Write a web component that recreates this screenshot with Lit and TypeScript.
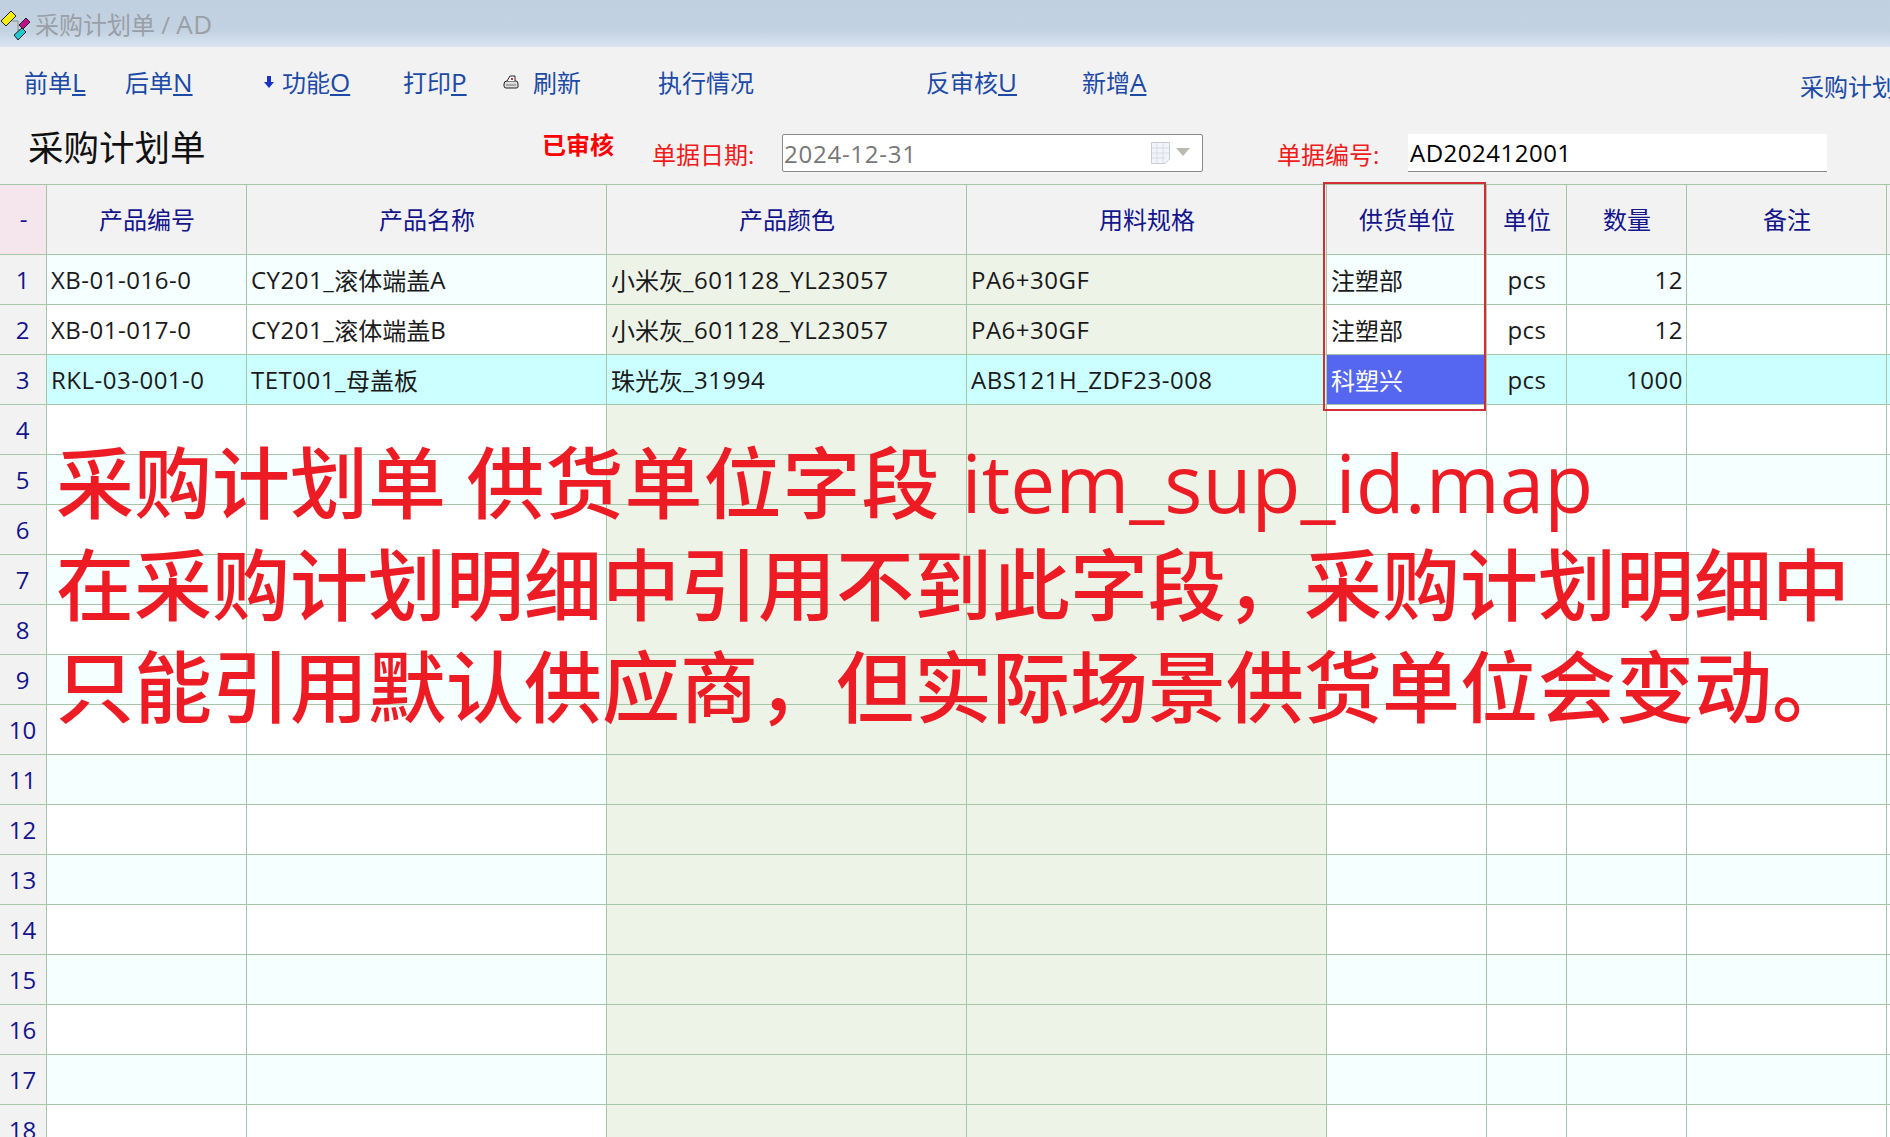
import { LitElement, html, css, svg } from "lit";
import { customElement } from "lit/decorators.js";

const HEAD = ["产品编号", "产品名称", "产品颜色", "用料规格", "供货单位", "单位", "数量", "备注"];
const DATA: Record<number, string[]> = {
  1: ["XB-01-016-0", "CY201_滚体端盖A", "小米灰_601128_YL23057", "PA6+30GF", "注塑部", "pcs", "12", ""],
  2: ["XB-01-017-0", "CY201_滚体端盖B", "小米灰_601128_YL23057", "PA6+30GF", "注塑部", "pcs", "12", ""],
  3: ["RKL-03-001-0", "TET001_母盖板", "珠光灰_31994", "ABS121H_ZDF23-008", "科塑兴", "pcs", "1000", ""],
};
const ALIGN = ["", "", "", "", "", "center", "right", ""];

const runs = (t: string) =>
  t.split(/([\x21-\x7e]+)/).map((p, i) => (i % 2 ? html`<span class="l">${p}</span>` : p));

@customElement("app-root")
export class AppRoot extends LitElement {
  static styles = css`
    :host {
      display: block;
      position: relative;
      width: 1890px;
      height: 1137px;
      overflow: hidden;
      background: #f2f2f2;
      font-family: "Open Sans", "Noto Sans CJK SC", sans-serif;
      font-size: 24px;
      color: #1a1a1a;
    }
    .l { letter-spacing: 0.5px; }
    .title {
      height: 47px;
      display: flex;
      align-items: center;
      background: linear-gradient(#c1d0e0 0%, #c3d2e1 65%, #d9e5f1 100%);
      color: #9a9fa6;
      font-size: 24px;
      gap: 4px;
    }
    .title .l { font-size: 26px; }
    .title svg { width: 31px; height: 36px; flex: none; }
    .toolbar {
      height: 72px;
      box-sizing: border-box;
      padding-bottom: 3px;
      display: grid;
      grid-template-columns: 24px 101px 138px 19px 121px 100px 30px 125px 268px 156px 718px 1fr;
      align-items: center;
      color: #1c4aa6;
      white-space: nowrap;
    }
    .toolbar u { text-underline-offset: 2px; font-size: 26px; line-height: 24px; }
    .side { margin-top: 8px; overflow: hidden; }
    .form {
      height: 65px;
      display: grid;
      grid-template-columns: 28px 514px 110px 130px 421px 74px 131px 419px;
      align-items: center;
    }
    .doc {
      font-family: "Liberation Serif", "Noto Sans CJK SC", serif;
      font-size: 35.500px;
      color: #111;
      margin-bottom: 13px;
      white-space: nowrap;
    }
    .state { color: #f00; font-weight: 700; margin-bottom: 17px; white-space: nowrap; }
    .lab { color: #f01c1c; margin-top: 3px; white-space: nowrap; }
    .date {
      height: 38px;
      margin-top: 3px;
      box-sizing: border-box;
      border: 1px solid #8a8a8a;
      border-radius: 2px;
      background: #fff;
      color: #777;
      display: flex;
      align-items: center;
      padding-left: 1px;
    }
    .date span { flex: 1; }
    .date .l { flex: none; letter-spacing: 0.75px; }
    .date svg { width: 44px; height: 24px; margin-right: 8px; }
    .code {
      height: 38px;
      margin-top: 3px;
      box-sizing: border-box;
      background: #fff;
      border-bottom: 1px solid #8a8a8a;
      color: #000;
      display: flex;
      align-items: center;
      padding-left: 2px;
    }
    .grid {
      display: grid;
      grid-template-columns: 47px 200px 360px 360px 360px 160px 80px 120px 200px 3px;
      grid-template-rows: 70px;
      grid-auto-rows: 50px;
      border-top: 1px solid #a6c6a8;
    }
    .grid > div {
      box-sizing: border-box;
      border-right: 1px solid #a6c6a8;
      border-bottom: 1px solid #a6c6a8;
      display: flex;
      align-items: center;
      padding: 0 3px 0 4px;
      white-space: nowrap;
      overflow: hidden;
    }
    .grid > .h { justify-content: center; color: #14148c; background: #f2f2f2; padding-bottom: 2px; }
    .grid > .n { background: #f2f2f2; color: #14148c; justify-content: center; padding: 0 1px 0 0; }
    .grid > .corner { background: #f5e6ee; }
    .grid > .odd { background: #f5ffff; }
    .grid > .even { background: #fff; }
    .grid > .green { background: #eef3e8; }
    .grid > .cur { background: #ccffff; }
    .grid > .sel { background: #5566f0; color: #fff; }
    .grid > .center { justify-content: center; }
    .grid > .right { justify-content: flex-end; }
    .grid > .end { border-right: none; }
    .box {
      position: absolute;
      left: 1323px;
      top: 182px;
      width: 163px;
      height: 229px;
      box-sizing: border-box;
      border: 2px solid #d12f35;
      pointer-events: none;
    }
    .note {
      position: absolute;
      left: 56px;
      top: 425px;
      color: #ed1c24;
      font-family: "Noto Sans CJK SC", "Open Sans", sans-serif;
      font-size: 78px;
      font-weight: 500;
      line-height: 102px;
      white-space: nowrap;
    }
    .note .first { margin: 3px 0 -3px; }
    .note .latin {
      font-family: "Open Sans", "Noto Sans CJK SC", sans-serif;
      font-size: 80px;
      font-weight: 400;
      margin-left: 21px;
    }
    .note .gap { margin-left: 3px; letter-spacing: 1px; }
    .ic { display: block; }
  `;

  private appIcon() {
    return svg`<svg viewBox="0 0 31 36">
      <path d="M12 15h6v9h6M18 24v4" fill="none" stroke="#8a8a8a" stroke-width="1"/>
      <path d="M1 15 L11 5 L16 10 L6 20 Z" fill="#f4ee10" stroke="#222" stroke-width="1"/>
      <path d="M19 19 L26 12 L30 16 L23 23 Z" fill="#c01088" stroke="#222" stroke-width="1"/>
      <path d="M14 29 L22 22 L26 26 L18 34 Z" fill="#22c8d0" stroke="#222" stroke-width="1"/>
    </svg>`;
  }

  private arrow() {
    return svg`<svg class="ic" width="12" height="14" viewBox="0 0 12 14"><path d="M4 1h4v6h3L6 13 1 7h3z" fill="#1a32c8"/></svg>`;
  }

  private printer() {
    return svg`<svg class="ic" width="16" height="14" viewBox="0 0 16 14">
      <path d="M1 9 Q1 6 4 6 H13 Q15 6 15 9 V12 Q15 13 13 13 H3 Q1 13 1 11 Z" fill="#ddd" stroke="#222"/>
      <path d="M4 6 L7 1 H12 L12 6" fill="#fff" stroke="#222"/>
      <path d="M8 3l2 2M10 3l-2 2" stroke="#d03030"/>
      <path d="M3 10h10" stroke="#777"/>
    </svg>`;
  }

  private calendar() {
    return svg`<svg viewBox="0 0 44 24">
      <path d="M1.500 1.500H19.500V18L15 22.500H1.500Z" fill="#f2f4fa" stroke="#c8ccd4"/>
      <path d="M2 7H19M2 12H19M2 17H15M7 2V22M13 2V22" stroke="#d8dce6"/>
      <path d="M26 7H40L33 15Z" fill="#b8bbb0"/>
    </svg>`;
  }

  render() {
    const rows = Array.from({ length: 18 }, (_, i) => i + 1);
    return html`
      <div class="title">${this.appIcon()}<span>采购计划单 / ${runs("AD")}</span></div>
      <div class="toolbar">
        <i></i>
        <span>前单<u>L</u></span>
        <span>后单<u>N</u></span>
        <span>${this.arrow()}</span>
        <span>功能<u>O</u></span>
        <span>打印<u>P</u></span>
        <span>${this.printer()}</span>
        <span>刷新</span>
        <span>执行情况</span>
        <span>反审核<u>U</u></span>
        <span>新增<u>A</u></span>
        <span class="side">采购计划单</span>
      </div>
      <div class="form">
        <i></i>
        <span class="doc">采购计划单</span>
        <span class="state">已审核</span>
        <span class="lab">单据日期:</span>
        <div class="date"><span>${runs("2024-12-31")}</span>${this.calendar()}</div>
        <i></i>
        <span class="lab">单据编号:</span>
        <div class="code">${runs("AD202412001")}</div>
      </div>
      <div class="grid">
        <div class="h corner">-</div>
        ${HEAD.map((h) => html`<div class="h">${h}</div>`)}
        <div class="h end"></div>
        ${rows.map((r) => {
          const d = DATA[r] ?? ["", "", "", "", "", "", "", ""];
          const base = r === 3 ? "cur" : r % 2 ? "odd" : "even";
          return html`
            <div class="n">${r}</div>
            ${d.map((v, i) => {
              let c = base;
              if (r !== 3 && (i === 2 || i === 3)) c = "green";
              if (r === 3 && i === 4) c = "sel";
              return html`<div class="${c} ${ALIGN[i]}">${runs(v)}</div>`;
            })}
            <div class="${base} end"></div>
          `;
        })}
      </div>
      <div class="box"></div>
      <div class="note">
        <div class="first">采购计划单 <span class="gap">供货单位字段</span><span class="latin">item_sup_id.map</span></div>
        <div>在采购计划明细中引用不到此字段，采购计划明细中</div>
        <div>只能引用默认供应商，但实际场景供货单位会变动。</div>
      </div>
    `;
  }
}
